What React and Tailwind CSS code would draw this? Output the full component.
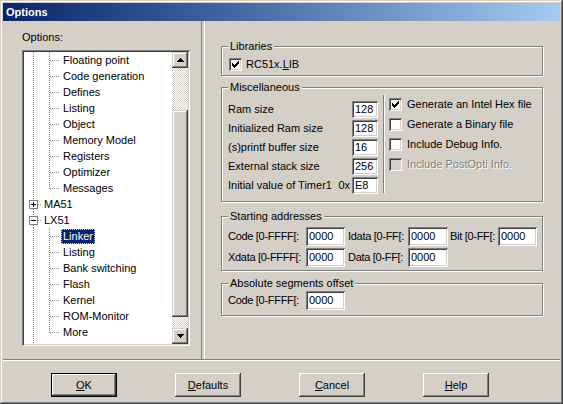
import React from "react";

const sunken =
  "shadow-[inset_1px_1px_#808080,inset_-1px_-1px_#ffffff,inset_2px_2px_#404040,inset_-2px_-2px_#d4d0c8]";
const raised =
  "shadow-[inset_-1px_-1px_#404040,inset_1px_1px_#ffffff,inset_-2px_-2px_#808080,inset_2px_2px_#d4d0c8]";
const scrollBevel =
  "shadow-[inset_-1px_-1px_#404040,inset_1px_1px_#d4d0c8,inset_-2px_-2px_#808080,inset_2px_2px_#ffffff]";
const checker =
  "bg-[image:repeating-conic-gradient(#ffffff_0_25%,#d4d0c8_0_50%)] bg-[length:2px_2px]";

const tree = [
  { type: "child", label: "Floating point" },
  { type: "child", label: "Code generation" },
  { type: "child", label: "Defines" },
  { type: "child", label: "Listing" },
  { type: "child", label: "Object" },
  { type: "child", label: "Memory Model" },
  { type: "child", label: "Registers" },
  { type: "child", label: "Optimizer" },
  { type: "child", label: "Messages", last: true },
  { type: "root", label: "MA51" },
  { type: "root", label: "LX51", open: true },
  { type: "child", label: "Linker", selected: true },
  { type: "child", label: "Listing" },
  { type: "child", label: "Bank switching" },
  { type: "child", label: "Flash" },
  { type: "child", label: "Kernel" },
  { type: "child", label: "ROM-Monitor" },
  { type: "child", label: "More", last: true },
  { type: "root", label: "Code Coverage" },
];

function TreeLines({ item }) {
  const dot = { stroke: "#808080", strokeDasharray: "1 1", shapeRendering: "crispEdges" };
  if (item.type === "child") {
    return (
      <svg width="37" height="16" className="shrink-0">
        <line x1="9.5" y1="0" x2="9.5" y2="16" {...dot} />
        <line x1="25.5" y1="0" x2="25.5" y2={item.last ? 9 : 16} {...dot} />
        <line x1="26" y1="8.5" x2="36" y2="8.5" {...dot} />
      </svg>
    );
  }
  return (
    <svg width="18" height="16" className="shrink-0" shapeRendering="crispEdges">
      <line x1="9.5" y1="0" x2="9.5" y2="4" {...dot} />
      <line x1="9.5" y1="13" x2="9.5" y2="16" {...dot} />
      <line x1="14" y1="8.5" x2="18" y2="8.5" {...dot} />
      <rect x="5.5" y="4.5" width="8" height="8" fill="#fff" stroke="#808080" />
      <line x1="7" y1="8.5" x2="12" y2="8.5" stroke="#000" />
      {!item.open && <line x1="9.5" y1="6" x2="9.5" y2="11" stroke="#000" />}
    </svg>
  );
}

function TreeRow({ item }) {
  return (
    <div className="h-[16px] flex items-center whitespace-nowrap">
      <TreeLines item={item} />
      <span
        className={
          item.selected
            ? "h-[15px] leading-[15px] px-[2px] bg-[#0a246a] text-white outline-1 outline-dotted outline-[#d4d0c8] -outline-offset-1"
            : "h-[15px] leading-[15px] px-[2px]"
        }
      >
        {item.label}
      </span>
    </div>
  );
}

function Arrow({ up }) {
  return (
    <svg width="7" height="4" shapeRendering="crispEdges">
      <polygon points={up ? "3.5,0 7,4 0,4" : "0,0 7,0 3.5,4"} fill="#000" />
    </svg>
  );
}

function Check({ checked, disabled }) {
  return (
    <span
      className={`w-[13px] h-[13px] shrink-0 flex items-center justify-center ${sunken} ${
        disabled ? "bg-[#d4d0c8]" : "bg-white"
      }`}
    >
      {checked && (
        <svg width="7" height="7" viewBox="0 0 7 7" shapeRendering="crispEdges">
          <path
            d="M6 0h1v1h-1z M5 1h2v1h-2z M0 2h1v1h-1z M4 2h3v1h-3z M0 3h2v1h-2z M3 3h3v1h-3z M0 4h5v1h-5z M1 5h3v1h-3z M2 6h1v1h-1z"
            fill="#000"
          />
        </svg>
      )}
    </span>
  );
}

function Field({ value, w }) {
  return (
    <div className={`${w} h-full shrink-0 bg-white ${sunken} pl-[3px] flex items-center leading-none`}>
      {value}
    </div>
  );
}

function Label({ w, className = "", children }) {
  return (
    <span className={`${w} shrink-0 whitespace-nowrap tracking-[-0.3px] ${className}`}>{children}</span>
  );
}

function Group({ label, h, className = "", children }) {
  return (
    <fieldset
      className={`w-[322px] ${h} border border-[#808080] shadow-[inset_1px_1px_#ffffff,1px_1px_#ffffff] ${className}`}
    >
      <legend className="ml-[6px] px-[2px] leading-[13px] bg-[#d4d0c8]">{label}</legend>
      {children}
    </fieldset>
  );
}

function Button({ children, isDefault }) {
  return (
    <div
      className={`w-[66px] h-[24px] flex items-center justify-center ${
        isDefault ? "border border-black" : ""
      }`}
    >
      <div className={`w-full h-full flex items-center justify-center ${raised}`}>{children}</div>
    </div>
  );
}

export default function App() {
  const misc = [
    { label: "Ram size", value: "128" },
    { label: "Initialized Ram size", value: "128" },
    { label: "(s)printf buffer size", value: "16" },
    { label: "External stack size", value: "256" },
  ];

  return (
    <div className="w-[563px] h-[404px] overflow-hidden bg-[#d4d0c8] p-[3px] flex flex-col text-[11px] text-black whitespace-nowrap font-['Liberation_Sans',Arial,sans-serif] shadow-[inset_-1px_-1px_#404040,inset_1px_1px_#d4d0c8,inset_-2px_-2px_#808080,inset_2px_2px_#ffffff]">
      {/* title bar */}
      <div className="h-[18px] shrink-0 bg-linear-to-r from-[#0a246a] to-[#a6caf0] flex items-center pl-[3px] text-white font-bold">
        Options
      </div>

      <div className="h-[338px] shrink-0 flex">
        {/* tree side */}
        <div className="w-[199px] shrink-0 border-r border-[#808080] pl-[19px] pt-[10px]">
          <div className="leading-[13px]">Options:</div>
          <div className={`mt-[6px] w-[168px] h-[296px] p-[2px] flex ${sunken}`}>
            <div className="flex-1 bg-white overflow-hidden">
              {tree.map((item, i) => (
                <TreeRow item={item} key={i} />
              ))}
            </div>
            <div className="w-[16px] flex flex-col">
              <div className={`h-[16px] bg-[#d4d0c8] flex items-center justify-center ${scrollBevel}`}>
                <Arrow up />
              </div>
              <div className={`h-[42px] ${checker}`} />
              <div className={`h-[207px] bg-[#d4d0c8] ${scrollBevel}`} />
              <div className={`h-[11px] ${checker}`} />
              <div className={`h-[16px] bg-[#d4d0c8] flex items-center justify-center ${scrollBevel}`}>
                <Arrow />
              </div>
            </div>
          </div>
        </div>

        {/* settings side */}
        <div className="ml-[2px] flex-1 border-l border-white pl-[16px] pt-[19px]">
          <Group label="Libraries" h="h-[36px]">
            <div className="pl-[7px] pt-[5px] flex items-center gap-[4px] h-[18px]">
              <Check checked />
              <span>
                RC51x.<u>L</u>IB
              </span>
            </div>
          </Group>

          <Group label="Miscellaneous" h="h-[121px]" className="mt-[5px]">
            <div className="flex pl-[6px] pt-[7px]">
              <div className="w-[150px] flex flex-col gap-[2px]">
                {misc.map((m) => (
                  <div className="h-[17px] flex items-center" key={m.label}>
                    <span className="flex-1">{m.label}</span>
                    <Field value={m.value} w="w-[26px]" />
                  </div>
                ))}
                <div className="h-[17px] flex items-center">
                  <span className="flex-1">Initial value of Timer1</span>
                  <span className="mr-[2px]">0x</span>
                  <Field value="E8" w="w-[26px]" />
                </div>
              </div>
              <div className="ml-[5px] -mt-[6px] h-[98px] w-[2px] border-l border-[#808080] border-r border-r-white" />
              <div className="ml-[4px] -mt-[3px] flex flex-col gap-[7px]">
                <div className="h-[13px] flex items-center gap-[5px]">
                  <Check checked />
                  <span>Generate an Intel Hex file</span>
                </div>
                <div className="h-[13px] flex items-center gap-[5px]">
                  <Check />
                  <span>Generate a Binary file</span>
                </div>
                <div className="h-[13px] flex items-center gap-[5px]">
                  <Check />
                  <span>Include Debug Info.</span>
                </div>
                <div className="h-[13px] flex items-center gap-[5px]">
                  <Check disabled />
                  <span className="text-[#808080] [text-shadow:1px_1px_0_#ffffff]">
                    Include PostOpti Info.
                  </span>
                </div>
              </div>
            </div>
          </Group>

          <Group label="Starting addresses" h="h-[61px]" className="mt-[8px]">
            <div className="pl-[6px] pt-[4px] flex flex-col gap-[2px]">
              <div className="h-[19px] flex items-center">
                <Label w="w-[78px]">Code [0-FFFF[:</Label>
                <Field value="0000" w="w-[39px]" />
                <Label w="w-[60px]" className="ml-[3px]">Idata [0-FF[:</Label>
                <Field value="0000" w="w-[40px]" />
                <Label w="w-[48px]" className="ml-[2px]">Bit [0-FF[:</Label>
                <Field value="0000" w="w-[39px]" />
              </div>
              <div className="h-[19px] flex items-center">
                <Label w="w-[78px]">Xdata [0-FFFF[:</Label>
                <Field value="0000" w="w-[39px]" />
                <Label w="w-[60px]" className="ml-[3px]">Data [0-FF[:</Label>
                <Field value="0000" w="w-[40px]" />
              </div>
            </div>
          </Group>

          <Group label="Absolute segments offset" h="h-[39px]" className="mt-[6px]">
            <div className="pl-[6px] pt-[1px] h-[20px] flex items-center">
              <Label w="w-[78px]">Code [0-FFFF[:</Label>
              <Field value="0000" w="w-[39px]" />
            </div>
          </Group>
        </div>
      </div>

      <div className="h-[2px] shrink-0 border-t border-[#808080] border-b border-b-white" />

      <div className="flex-1 flex pt-[12px] pl-[48px] gap-[58px]">
        <Button isDefault>
          <u>O</u>K
        </Button>
        <Button>
          <u>D</u>efaults
        </Button>
        <Button>
          <u>C</u>ancel
        </Button>
        <Button>
          <u>H</u>elp
        </Button>
      </div>
    </div>
  );
}
